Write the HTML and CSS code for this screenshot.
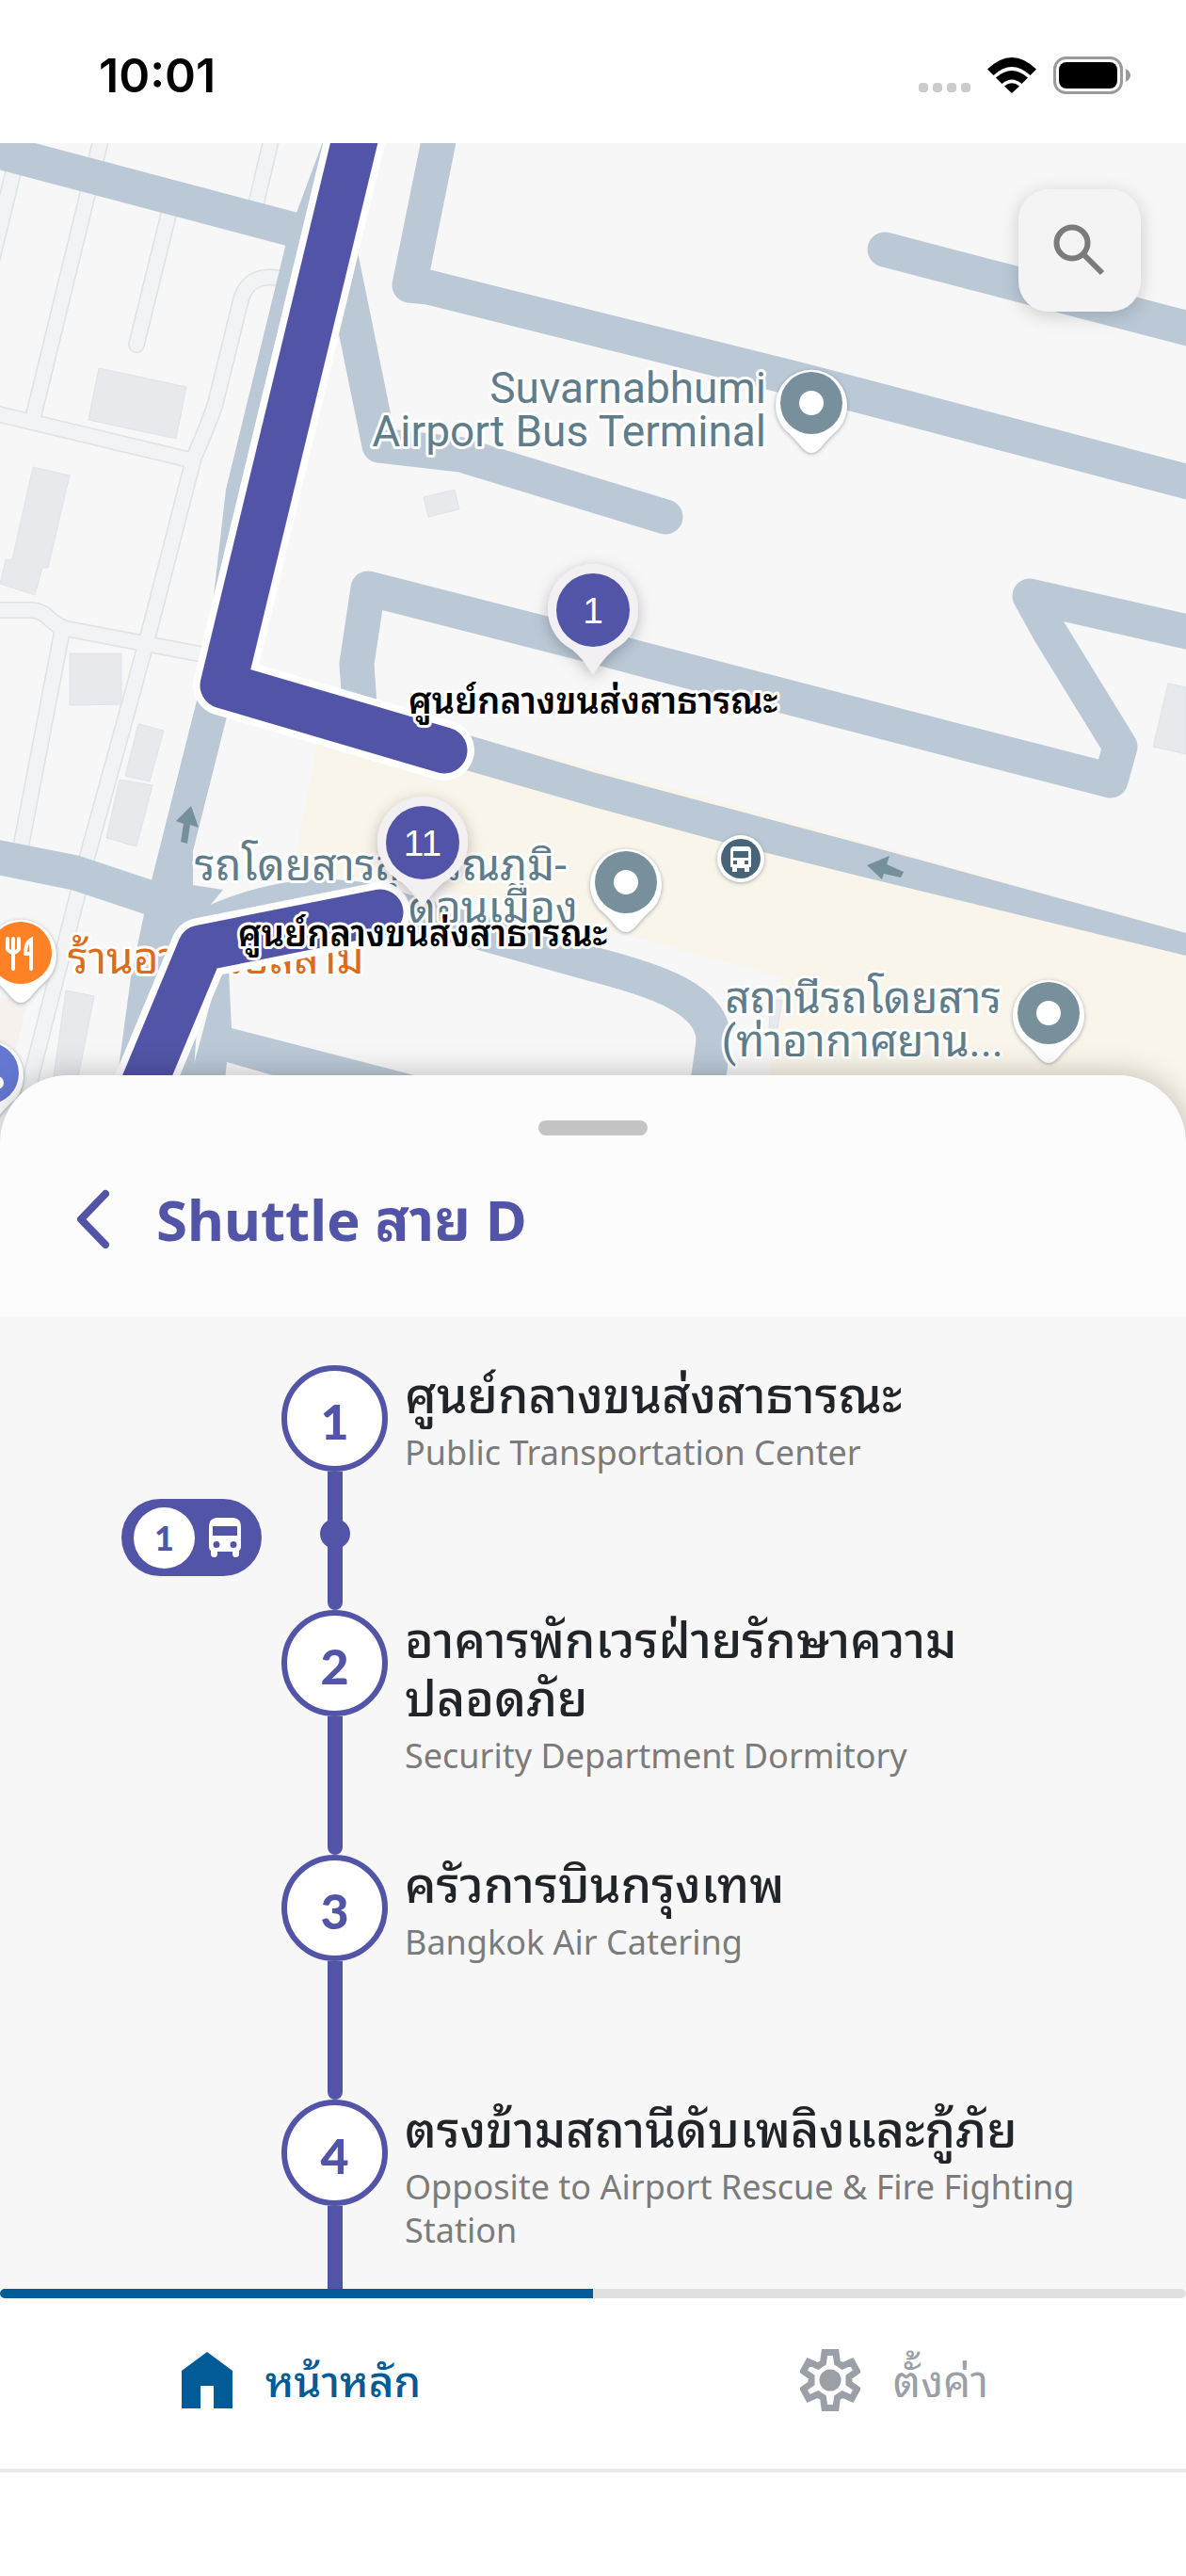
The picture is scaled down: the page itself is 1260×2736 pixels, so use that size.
FILE: index.html
```html
<!DOCTYPE html>
<html lang="th">
<head>
<meta charset="utf-8">
<meta name="viewport" content="width=device-width, initial-scale=1">
<title>Shuttle สาย D</title>
<link rel="stylesheet" href="styles.css">
</head>
<body>
<header class="status">
  <time class="status-time">10:01</time>
  <div class="status-icons">
    <span class="signal"><i></i><i></i><i></i><i></i></span>
    <svg width="52" height="38" viewBox="0 0 52 38" aria-hidden="true">
      <path d="M0 12.500Q26 -12.500 52 12.500L45.500 19Q26 1 6.500 19Z"/>
      <path d="M9 21.500Q26 6.500 43 21.500L36.500 28Q26 19 15.500 28Z"/>
      <path d="M18 30.500Q26 24 34 30.500L26 38Z"/>
    </svg>
    <svg width="82" height="40" viewBox="0 0 82 40" aria-hidden="true">
      <rect x="1.500" y="1.500" width="71" height="37" rx="12" fill="none" stroke="#9b9b9b" stroke-width="3"/>
      <rect x="6" y="6" width="62" height="28" rx="8"/>
      <path d="M77 13Q82 16 82 20T77 27Z" fill="#9b9b9b"/>
    </svg>
  </div>
</header>

<section class="map" aria-label="แผนที่">
  <svg class="map-canvas" viewBox="0 152 1260 1068" preserveAspectRatio="xMidYMin slice">
    <defs>
      <g id="lanes">
        <path d="M16 175L-12 290M108 145L36 440M181 220L145 366M289 145L270 225"/>
        <path d="M305 297Q265 287 256 318L229 428Q222 450 206 486L160 665L141 735L94 905L34 1140L20 1220"/>
        <path d="M-5 439L200 488M-5 648H32C52 648 52 664 72 668L225 697M66 670L22 900"/>
      </g>
      <g id="poi">
        <path d="M0 53C-8 53-13 42-23 33A38 38 0 1 1 23 33C13 42 8 53 0 53Z" fill="#fff" filter="url(#soft)"/>
        <circle r="33"/>
      </g>
      <g id="station">
        <path d="M0 68Q-12 50-22 42A48 48 0 1 1 22 42Q12 50 0 68Z" fill="#f2f0f2" filter="url(#pin-shadow)"/>
        <circle r="39" fill="#5255a7"/>
      </g>
      <filter id="soft" x="-30%" y="-30%" width="160%" height="160%"><feDropShadow dx="0" dy="1" stdDeviation="2" flood-color="#5b6d7c" flood-opacity=".6"/></filter>
      <filter id="pin-shadow" x="-40%" y="-40%" width="180%" height="180%"><feDropShadow dx="0" dy="4" stdDeviation="8" flood-color="#000" flood-opacity=".25"/></filter>
    </defs>

    <rect y="152" width="1260" height="1068" fill="#f7f7f7"/>
    <path fill="#faf5ea" d="M339 780L315 905L310 925L450 940L662 992L830 1038L827 1090L817 1142V1230H1260V990L760 850L420 760Z"/>
    <path fill="#f6f1ec" d="M0 1060L29 1062L16 1120H0Z"/>
    <g class="buildings">
      <path d="M105 391L198 411L187 466L94 446ZM35 496L74 505L51 603L45 603L37 632L0 620L6 595L13 594ZM74 694H129V748L74 749Z"/>
      <path d="M147 769L174 776L159 830L133 824ZM127 828L162 834L145 899L113 890ZM70 1052L100 1058L82 1150H56ZM450 528L483 520L488 541L455 549ZM1241 726L1260 730V801L1225 793ZM819 1062H831L826 1092H817Z"/>
    </g>
    <use href="#lanes" class="lane-edge"/>
    <use href="#lanes" class="lane"/>

    <g class="roads">
      <path d="M-20 156L335 250M-20 907L80 927L170 957M360 262L403 473L490 483L707 549"/>
      <path d="M468 140L435 303L455 305L852 404L1270 514M940 265L1270 351"/>
      <path d="M382 750L379 705L391 625L630 686L678 699L1032 791L1180 829L1190 793L1115 671L1094 633L1270 673"/>
      <path d="M215 985Q330 930 430 968L630 1024C700 1042 758 1062 758 1105Q756 1125 750 1160"/>
      <path d="M1290 830Q1275 880 1281 960"/>
    </g>
    <g fill="#bbc9d7">
      <path d="M345 145L315 226L303 262L240 520L225 650L209 744L161 935L153 971L139 1038L125 1142L118 1230H200L217 969L237 945L205 940L205 904L240 765L400 145Z"/>
      <path d="M233 1030H243L246 1092L440 1142L560 1180V1220L241 1128L230 1230H190L203 1142Z"/>
      <path d="M430 762L502 782L630 820L925 899L1260 991V1015L911 930L759 892L630 857L502 820L430 800Z"/>
    </g>
    <g fill="#76909a">
      <path d="M203 856L211 879L202 876L199 896L192 894L195 875L187 872Z"/>
      <path d="M921 919L945 909L942 918L960 926L957 932L939 928L937 934Z"/>
    </g>

    <g class="poi-label">
      <text x="814" y="428" text-anchor="end">Suvarnabhumi</text>
      <text x="814" y="474" text-anchor="end">Airport Bus Terminal</text>
      <text x="602" y="935" text-anchor="end">รถโดยสารสุวรรณภูมิ-</text>
      <text x="614" y="980" text-anchor="end">ดอนเมือง</text>
      <text x="1064" y="1076" text-anchor="end">สถานีรถโดยสาร</text>
      <text x="1066" y="1122" text-anchor="end">(ท่าอากาศยาน...</text>
      <text x="72" y="1034" class="food">ร้านอาหารอิสลาม</text>
    </g>
    <g fill="#78909c">
      <use href="#poi" x="862" y="428"/><use href="#poi" x="665" y="937"/><use href="#poi" x="1114" y="1076"/>
      <g fill="#fff"><circle cx="862" cy="428" r="13"/><circle cx="665" cy="937" r="13"/><circle cx="1114" cy="1076" r="13"/></g>
    </g>
    <use href="#poi" x="22" y="1012" fill="#ff8126"/>
    <g fill="none" stroke="#fff" stroke-width="4" stroke-linecap="round">
      <path d="M8 997V1008Q14 1016 20 1008V997M14 997V1029M33 1029V998Q27 1001 27 1013H33"/>
    </g>
    <use href="#poi" x="-13" y="1140" fill="#6478d2"/>
    <circle cx="-3" cy="1150" r="7" fill="#fff"/>
    <circle cx="787" cy="912" r="25" fill="#fff" filter="url(#soft)"/>
    <circle cx="787" cy="912" r="21" fill="#48647a"/>
    <path fill="#fff" fill-rule="evenodd" d="M780 899H794Q798 899 798 904V921H796V926H791V922H783V926H778V921H776V904Q776 899 780 899ZM779 904V911H795V904ZM779 914V918H783V914ZM791 914V918H795V914Z"/>

    <g class="route-case">
      <path d="M380 136L237 728L472 797"/><path d="M404 969L213 1007L140 1182"/>
    </g>
    <g class="route">
      <path d="M380 136L237 728L472 797"/><path d="M404 969L213 1007L140 1182"/>
    </g>
    <use href="#station" x="630" y="648"/>
    <use href="#station" x="449" y="895"/>
    <g class="pin-number"><text x="630" y="662">1</text><text x="449" y="909">11</text></g>
    <g class="station-name">
      <text x="630" y="758">ศูนย์กลางขนส่งสาธารณะ</text>
      <text x="449" y="1005">ศูนย์กลางขนส่งสาธารณะ</text>
    </g>
  </svg>
  <button class="search" type="button" aria-label="ค้นหา">
    <svg width="56" height="56" viewBox="0 0 56 56" fill="none" stroke="#7b7b7b" stroke-width="6" aria-hidden="true"><circle cx="20" cy="20" r="16.500"/><path d="M32 32L52 52"/></svg>
  </button>
</section>

<main class="sheet">
  <span class="handle"></span>
  <div class="sheet-head">
    <button class="back" type="button" aria-label="ย้อนกลับ">
      <svg width="36" height="64" viewBox="0 0 36 64" fill="none" stroke="#5255a7" stroke-width="8" stroke-linecap="round" stroke-linejoin="round" aria-hidden="true"><path d="M32 5L6 32L32 59"/></svg>
    </button>
    <h1>Shuttle สาย D</h1>
  </div>
  <ol class="stops">
    <li class="stop">
      <div class="stop-side">
        <span class="bus-badge"><b>1</b>
          <svg width="34" height="42" viewBox="0 0 34 42" aria-hidden="true"><path fill="#fff" fill-rule="evenodd" d="M8 0H26Q34 1 34 9V30Q34 34 32 35V39Q32 42 28 42Q25 42 25 38V36H9V38Q9 42 6 42Q2 42 2 39V35Q0 34 0 30V9Q0 1 8 0ZM4 9V19H30V9ZM8 25A3 3 0 1 0 8 32A3 3 0 1 0 8 25ZM26 25A3 3 0 1 0 26 32A3 3 0 1 0 26 25Z"/></svg>
        </span>
      </div>
      <div class="stop-track has-bus"><span class="stop-number">1</span></div>
      <div class="stop-text"><h2>ศูนย์กลางขนส่งสาธารณะ</h2><p>Public Transportation Center</p></div>
    </li>
    <li class="stop">
      <div class="stop-side"></div>
      <div class="stop-track"><span class="stop-number">2</span></div>
      <div class="stop-text"><h2>อาคารพักเวรฝ่ายรักษาความ<wbr>ปลอดภัย</h2><p>Security Department Dormitory</p></div>
    </li>
    <li class="stop">
      <div class="stop-side"></div>
      <div class="stop-track"><span class="stop-number">3</span></div>
      <div class="stop-text"><h2>ครัวการบินกรุงเทพ</h2><p>Bangkok Air Catering</p></div>
    </li>
    <li class="stop">
      <div class="stop-side"></div>
      <div class="stop-track"><span class="stop-number">4</span></div>
      <div class="stop-text"><h2>ตรงข้ามสถานีดับเพลิงและกู้ภัย</h2><p>Opposite to Airport Rescue &amp; Fire Fighting Station</p></div>
    </li>
  </ol>
</main>

<nav class="tabs">
  <a class="tab active" href="#home">
    <svg width="54" height="60" viewBox="0 0 54 60" fill="currentColor" aria-hidden="true"><path d="M27 0L54 20V60H34V36H20V60H0V20Z"/></svg>
    <span>หน้าหลัก</span>
  </a>
  <a class="tab" href="#settings">
    <svg width="64" height="66" viewBox="0 0 64 66" aria-hidden="true">
      <path fill="none" stroke="currentColor" stroke-width="7" d="M26 3.500H38L39.500 14.500L45 18L55 13.500L60.500 23.500L52 29.500V36.500L60.500 42.500L55 52.500L45 48L39.500 51.500L38 62.500H26L24.500 51.500L19 48L9 52.500L3.500 42.500L12 36.500V29.500L3.500 23.500L9 13.500L19 18L24.500 14.500Z"/>
      <circle cx="32" cy="33" r="11.500" fill="currentColor"/>
    </svg>
    <span>ตั้งค่า</span>
  </a>
</nav>
</body>
</html>
```

FILE: styles.css
```css
:root {
  --purple: #5255a7;
  --blue: #005b96;
  --grey: #9aa0a6;
}

* { box-sizing: border-box; }

body {
  margin: 0;
  height: 100vh;
  display: flex;
  flex-direction: column;
  background: #fff;
  font-family: "Noto Sans", "Noto Sans Thai Looped", "Noto Looped Thai", "Noto Sans Thai", sans-serif;
  overflow: hidden;
}

button { padding: 0; border: 0; background: none; cursor: pointer; }
h1, h2, p, ol { margin: 0; padding: 0; }
svg { display: block; }

.status {
  flex: none;
  height: 152px;
  padding: 8px 59px 0 105px;
  display: flex;
  align-items: center;
  justify-content: space-between;
}
.status-time { font: 600 50px/1 Inter, sans-serif; }
.status-icons { display: flex; align-items: center; gap: 18px; }
.signal { display: flex; gap: 5px; align-self: flex-end; padding-bottom: 2px; }
.signal i { width: 10px; height: 10px; border-radius: 4px; background: #cbcbcb; }

.map { position: relative; flex: none; height: 39vh; overflow: hidden; }
.map-canvas { width: 100%; height: 100%; }
.buildings { fill: #e8e9ed; stroke: #dfe2e7; stroke-width: 1; }
.lane-edge, .lane, .roads, .route, .route-case { fill: none; stroke-linecap: round; stroke-linejoin: round; }
.lane-edge { stroke: #dfe2e4; stroke-width: 18; }
.lane { stroke: #f1f3f4; stroke-width: 15; }
.roads { stroke: #bbc9d7; stroke-width: 37; }
.route-case { stroke: #fff; stroke-width: 64; }
.route { stroke: var(--purple); stroke-width: 49; }
.poi-label {
  font: 400 46px Roboto, "Noto Sans Thai Looped", "Noto Looped Thai", "Noto Sans Thai", sans-serif;
  fill: #5f7d8a;
  stroke: #fff;
  stroke-width: 6;
  stroke-linejoin: round;
  paint-order: stroke;
}
.poi-label .food { fill: #dd6b1c; }
.pin-number { font: 39px "Liberation Sans", sans-serif; fill: #fff; text-anchor: middle; }
.station-name {
  font: 600 38px "Noto Sans", "Noto Sans Thai Looped", "Noto Looped Thai", "Noto Sans Thai", sans-serif;
  text-anchor: middle;
  stroke: #fff;
  stroke-width: 6;
  stroke-linejoin: round;
  paint-order: stroke;
}
.search {
  position: absolute;
  top: 49px;
  right: 48px;
  width: 130px;
  height: 130px;
  border-radius: 32px;
  background: #f4f4f4;
  box-shadow: 0 4px 20px rgb(0 0 0 / 18%);
  display: grid;
  place-items: center;
}

.sheet {
  position: relative;
  flex: 1;
  min-height: 0;
  margin-top: -77px;
  display: flex;
  flex-direction: column;
  border-radius: 72px 72px 0 0;
  background: #fcfcfc;
  box-shadow: 0 0 32px rgb(0 0 0 / 25%);
}
.handle {
  flex: none;
  align-self: center;
  width: 116px;
  height: 16px;
  margin-top: 48px;
  border-radius: 8px;
  background: #c4c4c4;
}
.sheet-head {
  flex: none;
  height: 192px;
  padding: 0 80px 14px;
  display: flex;
  align-items: center;
  gap: 50px;
}
h1 { font-size: 60px; line-height: 80px; color: var(--purple); }

.stops {
  flex: 1;
  min-height: 0;
  overflow: hidden;
  padding-top: 52px;
  background: #f7f7f7;
  list-style: none;
}
.stop {
  display: grid;
  grid-template-columns: 299px 113px 1fr;
  min-height: 260px;
  padding-right: 96px;
}
.stop-side { display: flex; justify-content: flex-end; padding: 142px 21px 0 0; }
.bus-badge {
  display: flex;
  align-items: center;
  gap: 15px;
  height: 82px;
  padding: 0 22px 0 13px;
  border-radius: 41px;
  background: var(--purple);
}
.bus-badge b {
  width: 65px;
  border-radius: 50%;
  background: #fff;
  color: var(--purple);
  font: 900 36px/65px Lato, sans-serif;
  text-align: center;
}
.stop-track { position: relative; display: flex; flex-direction: column; align-items: center; }
.stop-track::after { content: ""; flex: 1; width: 16px; border-radius: 0 0 8px 8px; background: var(--purple); }
.has-bus::before {
  content: "";
  position: absolute;
  top: 163px;
  width: 32px;
  height: 32px;
  border-radius: 50%;
  background: var(--purple);
}
.stop-number {
  width: 113px;
  height: 113px;
  border: 6px solid var(--purple);
  border-radius: 50%;
  background: #fff;
  color: var(--purple);
  font: 900 52px/106px Lato, sans-serif;
  text-align: center;
}
.stop-text { padding-left: 18px; }
h2 { font-size: 52px; line-height: 62px; font-weight: 500; color: #212429; }
p { margin-top: 8px; font-size: 36px; line-height: 46px; color: #7b7b7b; }

.tabs {
  position: relative;
  flex: none;
  display: grid;
  grid-template-columns: 1fr 1fr;
  margin-bottom: 110px;
  border-bottom: 4px solid #e8e8e8;
  background: #fff;
}
.tabs::before {
  content: "";
  position: absolute;
  inset: 0 0 auto;
  height: 10px;
  border-radius: 5px;
  background: linear-gradient(90deg, var(--blue) 50%, #e0e0e0 50%);
}
.tab {
  height: 191px;
  padding: 2px 0 0 10px;
  display: flex;
  align-items: center;
  justify-content: center;
  gap: 35px;
  color: var(--grey);
  font-size: 46px;
  line-height: 64px;
  text-decoration: none;
}
.active { color: var(--blue); font-weight: 500; }
```
